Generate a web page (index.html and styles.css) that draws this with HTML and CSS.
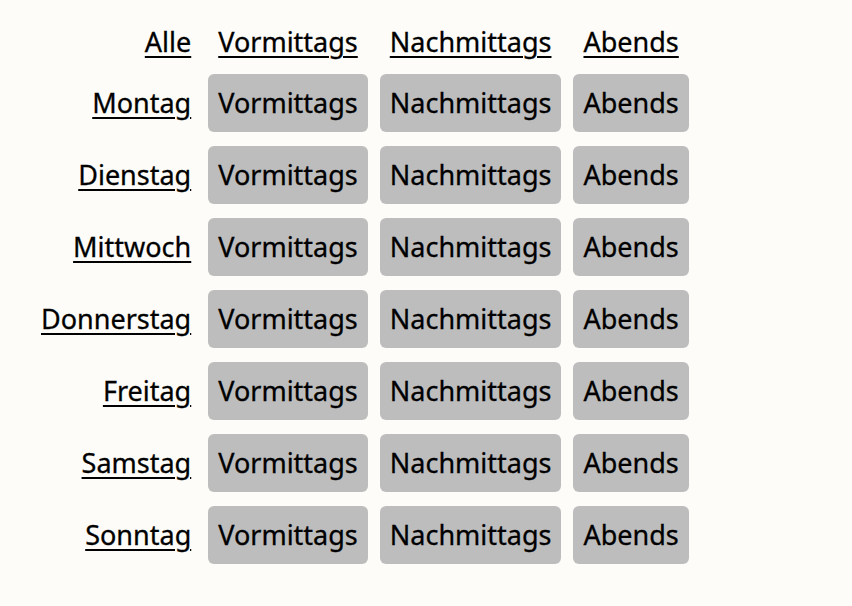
FILE: index.html
```html
<!DOCTYPE html>
<html lang="de">
<head>
<meta charset="utf-8">
<link rel="stylesheet" href="styles.css">
</head>
<body>
<div class="grid">
  <a class="label" href="#">Alle</a>
  <a class="head" href="#">Vormittags</a>
  <a class="head" href="#">Nachmittags</a>
  <a class="head" href="#">Abends</a>

  <a class="label" href="#">Montag</a>
  <button class="btn">Vormittags</button><button class="btn">Nachmittags</button><button class="btn">Abends</button>

  <a class="label" href="#">Dienstag</a>
  <button class="btn">Vormittags</button><button class="btn">Nachmittags</button><button class="btn">Abends</button>

  <a class="label" href="#">Mittwoch</a>
  <button class="btn">Vormittags</button><button class="btn">Nachmittags</button><button class="btn">Abends</button>

  <a class="label" href="#">Donnerstag</a>
  <button class="btn">Vormittags</button><button class="btn">Nachmittags</button><button class="btn">Abends</button>

  <a class="label" href="#">Freitag</a>
  <button class="btn">Vormittags</button><button class="btn">Nachmittags</button><button class="btn">Abends</button>

  <a class="label" href="#">Samstag</a>
  <button class="btn">Vormittags</button><button class="btn">Nachmittags</button><button class="btn">Abends</button>

  <a class="label" href="#">Sonntag</a>
  <button class="btn">Vormittags</button><button class="btn">Nachmittags</button><button class="btn">Abends</button>
</div>
</body>
</html>
```

FILE: styles.css
```css
html, body {
  margin: 0;
  padding: 0;
  background: #fdfcf8;
}
body {
  font-family: "Noto Sans", sans-serif;
  font-size: 27px;
  color: #000;
}
.grid {
  display: inline-grid;
  grid-template-columns: auto auto auto auto;
  column-gap: 12px;
  row-gap: 14px;
  padding: 24px 0 0 41px;
  align-items: center;
}
a {
  color: #000;
  text-decoration: underline;
  text-underline-offset: 4px;
  text-decoration-thickness: 2px;
  line-height: 36px;
  -webkit-text-stroke: 0.3px #000;
}
.label {
  text-align: right;
  padding-right: 5px;
}
.head {
  text-align: center;
}
.btn {
  font-family: "Noto Sans", sans-serif;
  font-size: 27px;
  line-height: 36px;
  color: #000;
  background: #bdbdbd;
  border: none;
  border-radius: 6px;
  padding: 11px 10px;
  margin: 0;
  -webkit-text-stroke: 0.3px #000;
}
```
